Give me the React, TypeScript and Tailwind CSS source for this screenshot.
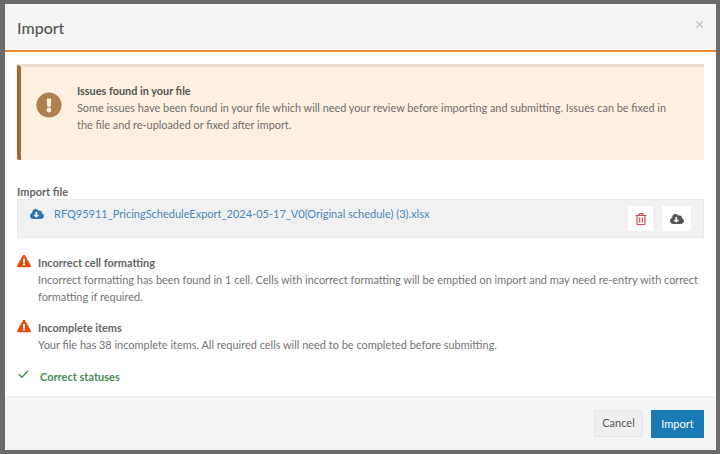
import { FaCloudDownloadAlt, FaExclamationCircle, FaExclamationTriangle, FaRegTrashAlt } from "react-icons/fa";
import { Check, X } from "lucide-react";

function Issue({ title, children }: { title: string; children: React.ReactNode }) {
  return (
    <div className="flex">
      <div className="w-[21px] shrink-0">
        <FaExclamationTriangle className="text-[#e04f0f]" size={14} />
      </div>
      <div className="text-[10.95px] leading-[17px]">
        <div className="font-bold text-[#666]">{title}</div>
        <div className="text-[#747474]">{children}</div>
      </div>
    </div>
  );
}

export default function App() {
  return (
    <div className="h-[454px] w-[720px] overflow-hidden bg-[#6b6b6b] pl-[5px] pt-[4px] font-['Lato',sans-serif]">
      <div className="flex h-[446px] w-[711px] flex-col bg-white">
        <div className="flex h-[48px] shrink-0 items-start justify-between border-b-2 border-[#e8862e] bg-[#f5f5f5] pl-[12px] pr-[11px]">
          <div className="pt-[13px] text-[16px] font-medium leading-[22px] text-[#555]">Import</div>
          <X className="mt-[15px] text-[#c4c4c4]" size={11} strokeWidth={3} />
        </div>

        <div className="flex-1 px-[12px] pt-[12px]">
          <div className="flex h-[96px] rounded-l-[2px] border-l-[4px] border-t-[3px] border-[#a66a2e] border-t-[#eaddcd] bg-[#fef0e1]">
            <div className="w-[56px] shrink-0 pl-[15px] pt-[25px]">
              <FaExclamationCircle className="text-[#ae7f4f]" size={26} />
            </div>
            <div className="pt-[15px] text-[10.87px] leading-[17px]">
              <div className="font-bold text-[#555]">Issues found in your file</div>
              <div className="w-[600px] text-[#6e6e6e]">
                Some issues have been found in your file which will need your review before importing and submitting. Issues can be fixed in the file and re-uploaded or fixed after import.
              </div>
            </div>
          </div>

          <div className="mt-[24px] text-[11px] font-bold leading-[15px] text-[#666]">Import file</div>
          <div className="flex h-[39px] items-start justify-between border border-[#e8e8e8] bg-[#f1f1f1] pl-[12px] pr-[12px]">
            <div className="flex items-center pt-[5px]">
              <FaCloudDownloadAlt className="mr-[10px] text-[#2f76b0]" size={14} />
              <span className="text-[11px] leading-[17px] text-[#4a86bb]">RFQ95911_PricingScheduleExport_2024-05-17_V0(Original schedule) (3).xlsx</span>
            </div>
            <div className="flex gap-[9px] pt-[6px]">
              <div className="flex h-[25px] w-[25px] items-center justify-center bg-white">
                <FaRegTrashAlt className="text-[#c9485b]" size={12} />
              </div>
              <div className="flex h-[25px] w-[29px] items-center justify-center bg-white">
                <FaCloudDownloadAlt className="text-[#555]" size={14} />
              </div>
            </div>
          </div>

          <div className="mt-[16px] flex flex-col gap-[14px]">
            <Issue title="Incorrect cell formatting">
              Incorrect formatting has been found in 1 cell. Cells with incorrect formatting will be emptied on import and may need re-entry with correct formatting if required.
            </Issue>
            <Issue title="Incomplete items">
              Your file has 38 incomplete items. All required cells will need to be completed before submitting.
            </Issue>
          </div>

          <div className="mt-[15px] flex items-start">
            <Check className="mr-[10px] text-[#3f8a4c]" size={13} strokeWidth={2.5} />
            <span className="text-[11px] font-bold leading-[17px] text-[#4b8a55]">Correct statuses</span>
          </div>
        </div>

        <div className="flex h-[54px] shrink-0 items-start justify-end gap-[8px] border-t border-[#ececec] bg-[#f5f5f5] pr-[12px] pt-[13px]">
          <button className="h-[27px] w-[49px] rounded-[2px] border border-[#e6e6e6] bg-[#efefef] text-[11px] text-[#555]">Cancel</button>
          <button className="h-[28px] w-[53px] bg-[#1a7ab5] text-[11px] text-white">Import</button>
        </div>
      </div>
    </div>
  );
}
